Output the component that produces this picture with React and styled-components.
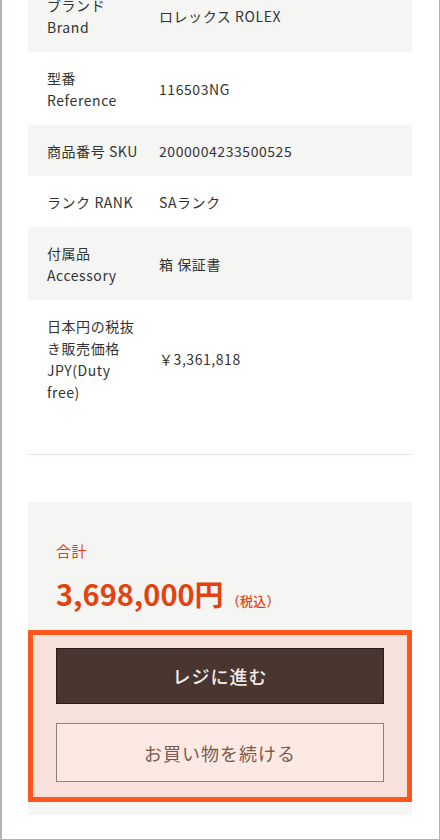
import React from 'react';
import styled, {createGlobalStyle} from 'styled-components';

const GlobalStyle = createGlobalStyle`
  html, body {
    margin: 0;
    padding: 0;
    background: #ffffff;
  }
  #root {
    width: 440px;
    height: 840px;
    overflow: hidden;
  }
`;

const Frame = styled.div`
  width: 440px;
  height: 840px;
  box-sizing: border-box;
  border-left: 2px solid #b8b0ad;
  border-right: 1px solid #b8b0ad;
  border-bottom: 1px solid #b8b0ad;
  padding: 0 27px 0 26px;
  overflow: hidden;
  font-family: "Noto Sans CJK JP", "Noto Sans", sans-serif;
  color: #333333;
`;

const SpecTable = styled.div`
  margin-top: -21px;
  padding-bottom: 37px;
  border-bottom: 1px solid #eee5e2;
`;

const SpecRow = styled.div`
  display: grid;
  grid-template-columns: 94px 1fr;
  column-gap: 18px;
  align-items: center;
  padding: 14.5px 19px;
  background: ${({$shaded}) => ($shaded ? '#f5f5f3' : '#ffffff')};
  font-size: 14px;
  line-height: 22px;
  letter-spacing: 0.04em;
`;

const SpecLabel = styled.div`
  word-break: break-word;
`;

const SpecValue = styled.div``;

const TotalBox = styled.div`
  margin-top: 47px;
  background: #f5f5f3;
  padding: 38px 0 13px;
`;

const TotalLabel = styled.div`
  padding-left: 28px;
  font-size: 15px;
  line-height: 22px;
  color: #e2430f;
  letter-spacing: 0.04em;
`;

const Price = styled.div`
  margin-top: 11px;
  padding-left: 28px;
  display: flex;
  align-items: baseline;
  color: #e2430f;
  height: 40px;
`;

const Amount = styled.span`
  font-size: 29px;
  font-weight: 700;
  line-height: 40px;
`;

const Tax = styled.span`
  margin-left: 3px;
  font-size: 13px;
  font-weight: 500;
  letter-spacing: 0.02em;
`;

const Highlight = styled.div`
  margin-top: 17px;
  border: 5px solid #ff561d;
  background: #f6e2da;
  padding: 13px 23px 15px;
  display: flex;
  flex-direction: column;
  gap: 19px;
`;

const ActionButton = styled.button`
  height: ${({$primary}) => ($primary ? '56px' : '59px')};
  width: 100%;
  box-sizing: border-box;
  border: 1px solid ${({$primary}) => ($primary ? '#2c1d18' : '#9c7c70')};
  background: ${({$primary}) => ($primary ? '#4a3630' : '#fde9e3')};
  color: ${({$primary}) => ($primary ? '#f6ece7' : '#7a5a4e')};
  font-family: "Noto Sans CJK JP", "Noto Sans", sans-serif;
  font-size: 18px;
  font-weight: ${({$primary}) => ($primary ? 500 : 400)};
  letter-spacing: 1px;
  cursor: pointer;
`;

const specs = [
  {label: 'ブランド Brand', value: 'ロレックス ROLEX', lines: ['ブランド', 'Brand']},
  {label: '型番 Reference', value: '116503NG', lines: ['型番', 'Reference']},
  {label: '商品番号 SKU', value: '2000004233500525'},
  {label: 'ランク RANK', value: 'SAランク'},
  {label: '付属品 Accessory', value: '箱 保証書', lines: ['付属品', 'Accessory']},
  {label: '日本円の税抜き販売価格 JPY(Duty free)', value: '￥3,361,818'},
];

const App = () => {
  return (
    <>
      <GlobalStyle />
      <Frame>
        <SpecTable>
          {specs.map((s, i) => (
            <SpecRow key={s.label} $shaded={i % 2 === 0}>
              <SpecLabel>
                {s.lines
                  ? s.lines.map((l, j) => <div key={j}>{l}</div>)
                  : s.label}
              </SpecLabel>
              <SpecValue>{s.value}</SpecValue>
            </SpecRow>
          ))}
        </SpecTable>
        <TotalBox>
          <TotalLabel>合計</TotalLabel>
          <Price>
            <Amount>3,698,000円</Amount>
            <Tax>（税込）</Tax>
          </Price>
          <Highlight>
            <ActionButton $primary>レジに進む</ActionButton>
            <ActionButton>お買い物を続ける</ActionButton>
          </Highlight>
        </TotalBox>
      </Frame>
    </>
  );
};

export default App;
